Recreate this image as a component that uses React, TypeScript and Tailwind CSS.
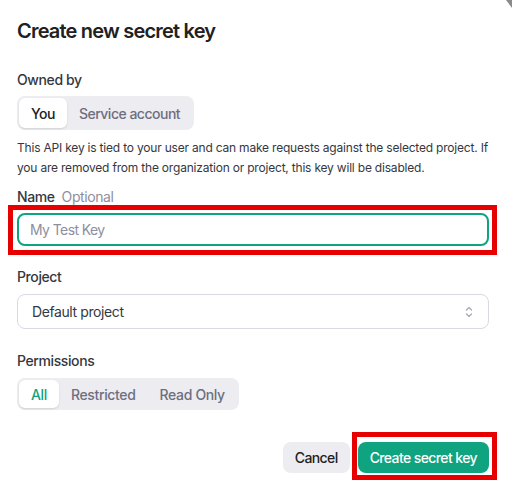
import React from "react";

const font = { fontFamily: "Inter, 'Noto Sans', sans-serif" };

function Chevrons() {
  return (
    <svg width="10" height="14" viewBox="0 0 10 14" fill="none" stroke="#a9a9bc" strokeWidth="1.3" strokeLinecap="round" strokeLinejoin="round">
      <path d="M2.5 5 L5 2.5 L7.5 5" />
      <path d="M2.5 9 L5 11.5 L7.5 9" />
    </svg>
  );
}

export default function App() {
  return (
    <div className="relative w-[512px] h-[489px] bg-white overflow-hidden pl-[17px] pr-[23px] pt-[17px] text-[#202123] tracking-[-0.4px]" style={font}>
      <h2 className="text-[20px] leading-[28px] font-semibold tracking-[-0.8px]">Create new secret key</h2>

      <div className="mt-[25px] text-[14px] leading-[20px] font-medium text-[#353740]">Owned by</div>
      <div className="mt-[6px] inline-flex h-[34px] items-center rounded-[8px] bg-[#ececf1] p-[2px] text-[14px] font-medium tracking-[-0.5px]">
        <div className="flex h-[30px] items-center rounded-[6px] bg-white px-[12px] text-[#202123] shadow-[0_1px_2px_rgba(0,0,0,0.12)]">You</div>
        <div className="flex h-[30px] items-center px-[12px] text-[#6e6e80]">Service account</div>
      </div>

      <p className="mt-[8px] text-[12px] leading-[20px] text-[#353740] tracking-[-0.2px]">
        This API key is tied to your user and can make requests against the selected project. If you are removed from the organization or project, this key will be disabled.
      </p>

      <div className="mt-[9px] flex items-center gap-[7px] text-[14px] leading-[20px]">
        <span className="font-medium text-[#353740]">Name</span>
        <span className="text-[#8e8ea0]">Optional</span>
      </div>
      <div className="mt-[6px] flex h-[33px] items-center rounded-[8px] border-2 border-[#10a37f] px-[11px] text-[14px] text-[#8e8ea0] tracking-[-0.6px]">
        My Test Key
      </div>

      <div className="mt-[21px] text-[14px] leading-[20px] font-medium text-[#353740]">Project</div>
      <div className="mt-[7px] flex h-[35px] items-center justify-between rounded-[8px] border border-[#d9d9e3] pl-[14px] pr-[14px] text-[14px] text-[#353740]">
        <span>Default project</span>
        <Chevrons />
      </div>

      <div className="mt-[22px] text-[14px] leading-[20px] font-medium text-[#353740]">Permissions</div>
      <div className="mt-[7px] inline-flex h-[32px] items-center rounded-[8px] bg-[#ececf1] p-[2px] text-[14px] font-medium tracking-[-0.35px]">
        <div className="flex h-[28px] items-center rounded-[6px] bg-white px-[12px] text-[#10a37f] shadow-[0_1px_2px_rgba(0,0,0,0.12)]">All</div>
        <div className="flex h-[28px] items-center px-[12px] text-[#6e6e80]">Restricted</div>
        <div className="flex h-[28px] items-center px-[12px] text-[#6e6e80]">Read Only</div>
      </div>

      <div className="mt-[32px] flex justify-end gap-[8px] text-[14px] font-medium tracking-[-0.6px]">
        <button className="h-[31px] rounded-[8px] bg-[#ececf1] px-[12px] text-[#202123]">Cancel</button>
        <button className="h-[31px] rounded-[8px] bg-[#10a37f] px-[12px] text-white">Create secret key</button>
      </div>

      <div className="pointer-events-none absolute left-[8px] top-[205px] h-[50px] w-[489px] border-[5px] border-[#e60000]" />
      <div className="pointer-events-none absolute left-[352px] top-[432px] h-[48px] w-[145px] border-[5px] border-[#e60000]" />
      <svg className="absolute right-0 top-0" width="6" height="8" viewBox="0 0 6 8">
        <path d="M0 0 L6 0 L6 8 Z" fill="#8a8a8a" />
      </svg>
    </div>
  );
}
